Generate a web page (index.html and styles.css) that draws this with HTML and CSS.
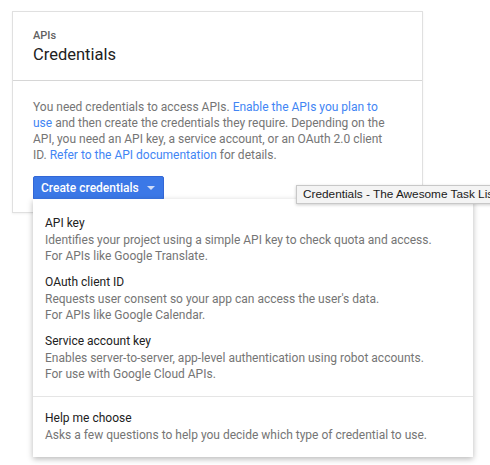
FILE: index.html
```html
<!DOCTYPE html>
<html>
<head>
<meta charset="utf-8">
<link rel="stylesheet" href="styles.css">
</head>
<body>
<div class="page">
  <div class="card">
    <div class="card-header">
      <div class="eyebrow">APIs</div>
      <div class="title">Credentials</div>
    </div>
    <div class="card-body">
      <p class="intro">You need credentials to access APIs. <a href="#">Enable the APIs you plan to use</a> and then create the credentials they require. Depending on the API, you need an API key, a service account, or an OAuth 2.0 client ID. <a href="#">Refer to the API documentation</a> for details.</p>
      <div class="create-wrap">
        <button class="btn-create">Create credentials <span class="caret"></span></button>
        <div class="menu">
          <div class="menu-group">
            <div class="menu-item">
              <div class="item-title">API key</div>
              <div class="item-desc">Identifies your project using a simple API key to check quota and access.<br>For APIs like Google Translate.</div>
            </div>
            <div class="menu-item">
              <div class="item-title">OAuth client ID</div>
              <div class="item-desc">Requests user consent so your app can access the user's data.<br>For APIs like Google Calendar.</div>
            </div>
            <div class="menu-item">
              <div class="item-title">Service account key</div>
              <div class="item-desc">Enables server-to-server, app-level authentication using robot accounts.<br>For use with Google Cloud APIs.</div>
            </div>
          </div>
          <div class="menu-group">
            <div class="menu-item">
              <div class="item-title">Help me choose</div>
              <div class="item-desc">Asks a few questions to help you decide which type of credential to use.</div>
            </div>
          </div>
        </div>
      </div>
    </div>
  </div>
  <div class="tooltip">Credentials - The Awesome Task List</div>
</div>
</body>
</html>
```

FILE: styles.css
```css
html, body {
  margin: 0;
  padding: 0;
  background: #ffffff;
  overflow: hidden;
}
.page {
  position: relative;
  width: 490px;
  height: 465px;
  overflow: hidden;
  padding: 11px 0 0 12px;
  box-sizing: border-box;
  font-family: Roboto, "Liberation Sans", sans-serif;
}
.card {
  width: 411px;
  height: 202px;
  box-sizing: border-box;
  border: 1px solid #e0e0e0;
  box-shadow: 0 1px 2px rgba(0,0,0,0.06);
  background: #fff;
}
.card-header {
  height: 69px;
  box-sizing: border-box;
  border-bottom: 1px solid #d6d6d6;
  padding: 17px 20px 0;
}
.eyebrow {
  font-size: 11px;
  line-height: 14px;
  color: #616161;
  font-weight: 500;
}
.title {
  font-size: 16.5px;
  line-height: 22px;
  margin-top: 1px;
  color: #212121;
}
.card-body {
  padding: 18px 20px 0;
}
.intro {
  margin: 0;
  width: 362px;
  font-size: 12px;
  line-height: 16px;
  color: #757575;
}
.intro a {
  color: #4285f4;
  text-decoration: none;
}
.create-wrap {
  position: relative;
  margin-top: 13px;
}
.btn-create {
  display: flex;
  align-items: center;
  gap: 5px;
  height: 24px;
  padding: 0 8px 0 7px;
  border: 1px solid #3367d6;
  border-radius: 2px;
  background: #3b78e7;
  color: #fff;
  font-family: Roboto, "Liberation Sans", sans-serif;
  font-size: 12px;
  font-weight: 500;
  white-space: nowrap;
  box-sizing: border-box;
}
.caret {
  width: 0;
  height: 0;
  border-left: 4px solid transparent;
  border-right: 4px solid transparent;
  border-top: 4px solid #cfdcf8;
  margin-left: 3px;
}
.menu {
  position: absolute;
  left: 0;
  top: 23px;
  width: 440px;
  background: #fff;
  box-shadow: 0 2px 6px rgba(0,0,0,0.28);
  z-index: 2;
}
.menu-group {
  padding: 16px 0 14px;
}
.menu-group + .menu-group {
  border-top: 1px solid #e5e5e5;
  padding-top: 13px;
}
.menu-item {
  padding: 0 12px;
}
.menu-item + .menu-item {
  margin-top: 10px;
}
.item-title {
  font-size: 12px;
  line-height: 16px;
  color: #212121;
  white-space: nowrap;
}
.item-desc {
  margin-top: 1px;
  font-size: 12px;
  line-height: 16px;
  color: #757575;
  white-space: nowrap;
}
.tooltip {
  position: absolute;
  left: 296px;
  top: 185px;
  height: 19px;
  box-sizing: border-box;
  padding: 0 6px;
  white-space: nowrap;
  background: #f4f4f4;
  border: 1px solid #c8c8c8;
  box-shadow: 0 1px 3px rgba(0,0,0,0.2);
  font-family: "Liberation Sans", Arial, sans-serif;
  font-size: 11.8px;
  line-height: 17px;
  color: #1a1a1a;
  z-index: 5;
}
```
